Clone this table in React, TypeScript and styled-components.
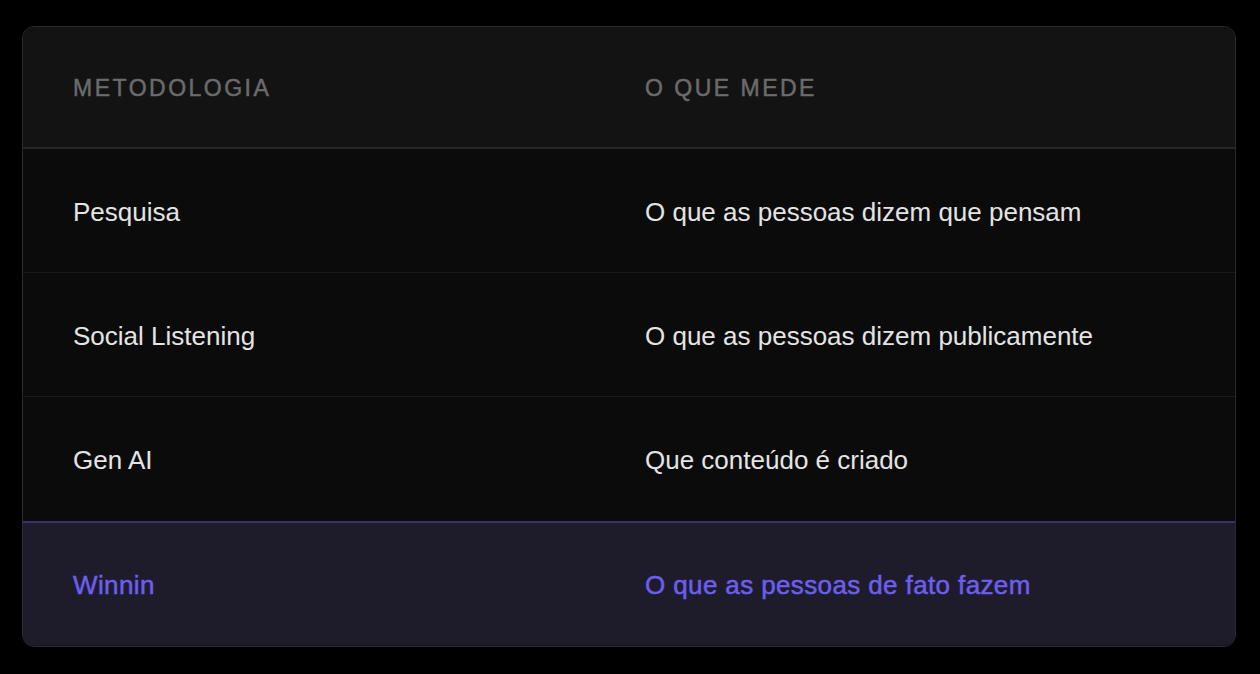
import React from "react";
import styled, { createGlobalStyle } from "styled-components";

const Global = createGlobalStyle`
  html, body { margin: 0; padding: 0; background: #000; }
  body { font-family: "Liberation Sans", Arial, sans-serif; }
`;

const Page = styled.div`
  width: 1260px;
  height: 674px;
  box-sizing: border-box;
  padding: 26px 24px 27px 22px;
  background: #000;
`;

const Card = styled.div`
  height: 100%;
  box-sizing: border-box;
  border: 1px solid #2b2b2d;
  border-radius: 12px;
  overflow: hidden;
  display: grid;
  grid-template-rows: 122px 124px 124px 124px 1fr;
  background: #0b0b0b;
`;

const Row = styled.div<{ $variant?: "head" | "body" | "hl"; $last?: boolean }>`
  display: grid;
  grid-template-columns: 572px 1fr;
  align-items: center;
  box-sizing: border-box;
  background: ${(p) =>
    p.$variant === "head" ? "#131313" : p.$variant === "hl" ? "#1e1c2a" : "#0b0b0b"};
  border-bottom: ${(p) =>
    p.$variant === "head" ? "2px solid #262628" : p.$last ? "none" : "1px solid #19191a"};
  border-top: ${(p) => (p.$variant === "hl" ? "2px solid #3b2f70" : "none")};
`;

const HeadCell = styled.div`
  padding-left: 50px;
  font-size: 23px;
  font-weight: 400;
  letter-spacing: 2.5px;
  color: #6b6b6b;
  -webkit-text-stroke: 0.5px #6b6b6b;
  padding-top: 2px;
`;

const Cell = styled.div<{ $hl?: boolean }>`
  padding-left: 50px;
  padding-top: 3px;
  font-size: 26px;
  color: ${(p) => (p.$hl ? "#6c5ef0" : "#e4e4e4")};
  -webkit-text-stroke: ${(p) => (p.$hl ? "0.5px #6c5ef0" : "0")};
  letter-spacing: ${(p) => (p.$hl ? "0.38px" : "0")};
`;

const rows = [
  ["Pesquisa", "O que as pessoas dizem que pensam"],
  ["Social Listening", "O que as pessoas dizem publicamente"],
  ["Gen AI", "Que conteúdo é criado"],
];

export default function App() {
  return (
    <>
      <Global />
      <Page>
        <Card>
          <Row $variant="head">
            <HeadCell>METODOLOGIA</HeadCell>
            <HeadCell>O QUE MEDE</HeadCell>
          </Row>
          {rows.map(([a, b], i) => (
            <Row key={a} $variant="body" $last={i === rows.length - 1}>
              <Cell>{a}</Cell>
              <Cell>{b}</Cell>
            </Row>
          ))}
          <Row $variant="hl">
            <Cell $hl>Winnin</Cell>
            <Cell $hl>O que as pessoas de fato fazem</Cell>
          </Row>
        </Card>
      </Page>
    </>
  );
}
